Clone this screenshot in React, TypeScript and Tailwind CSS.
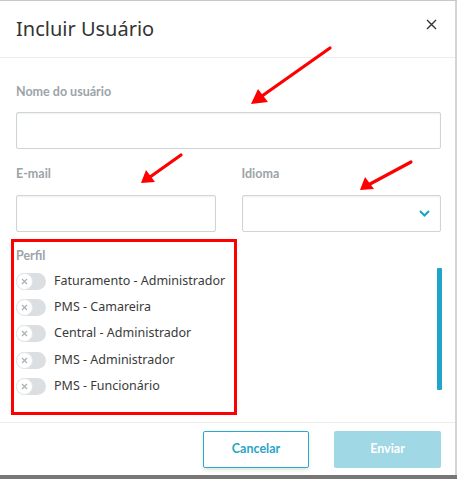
import React from 'react';

const perfis = [
  'Faturamento - Administrador',
  'PMS - Camareira',
  'Central - Administrador',
  'PMS - Administrador',
  'PMS - Funcionário',
];

function Toggle() {
  return (
    <div className="relative w-[30px] h-[17px] rounded-full bg-[#dcdfe2] shrink-0">
      <div className="absolute left-0 top-0 w-[17px] h-[17px] rounded-full bg-white border border-[#e3e5e7] flex items-center justify-center">
        <svg width="7" height="7" viewBox="0 0 7 7">
          <path d="M1 1 L6 6 M6 1 L1 6" stroke="#a9aeb2" strokeWidth="1.1" />
        </svg>
      </div>
    </div>
  );
}

function Label({ children }: { children: React.ReactNode }) {
  return (
    <div className="text-[12.5px] leading-4 font-bold text-[#9ba4a8]" style={{ fontFamily: 'Lato, sans-serif' }}>
      {children}
    </div>
  );
}

const inputCls =
  'w-full h-[37px] border border-[#cfd4d6] rounded-[2px] bg-white shadow-[inset_0_1px_2px_rgba(0,0,0,0.06)]';

export default function App() {
  return (
    <div
      className="relative w-[457px] h-[479px] bg-white border-t border-[#c8c8c8] overflow-hidden"
      style={{ fontFamily: '"Noto Sans", sans-serif' }}
    >
      <div className="absolute top-0 right-0 w-[2px] h-full bg-[#d4d4d4]" />

      <div className="h-[57px] pl-4 pr-5 flex items-center justify-between border-b border-[#ececec]">
        <h1 className="text-[20px] text-[#333] leading-none mb-[1px]">Incluir Usuário</h1>
        <svg width="11" height="11" viewBox="0 0 11 11" className="mb-[10px]">
          <path d="M1 1 L10 10 M10 1 L1 10" stroke="#333" strokeWidth="1.4" />
        </svg>
      </div>

      <div className="pl-4 pr-[16px] pt-[26px]">
        <Label>Nome do usuário</Label>
        <div className="mt-3">
          <div className={inputCls} />
        </div>

        <div className="mt-[17px] grid grid-cols-2 gap-[26px]">
          <div>
            <Label>E-mail</Label>
            <div className="mt-[13px]">
              <div className={inputCls} />
            </div>
          </div>
          <div>
            <Label>Idioma</Label>
            <div className="mt-[13px]">
              <div className={inputCls + ' flex items-center justify-end pr-[10px]'}>
                <svg width="11" height="7" viewBox="0 0 11 7">
                  <path d="M1 1 L5.5 5.5 L10 1" stroke="#1ba1c7" strokeWidth="2" fill="none" />
                </svg>
              </div>
            </div>
          </div>
        </div>

        <div className="mt-[16px] relative">
          <Label>Perfil</Label>
          <div className="mt-[4px] flex flex-col">
            {perfis.map((p) => (
              <div key={p} className="h-[26.3px] flex items-center gap-[8px]">
                <Toggle />
                <span className="text-[12.5px] text-[#3a3a3a]">{p}</span>
              </div>
            ))}
          </div>
          <div className="absolute right-[-1px] top-[20px] w-[5px] h-[122px] bg-[#1ea5c8] rounded-[1px]" />
        </div>
      </div>

      <div className="absolute left-0 right-[2px] top-[421px] h-[54px] border-t border-[#ececec] flex items-start justify-end gap-[25px] pr-[14px] pt-[8px]">
        <button className="w-[106px] h-[37px] border border-[#2aa7cd] rounded-[2px] text-[#2aa3c9] text-[12.5px] font-bold shadow-[0_2px_4px_rgba(0,0,0,0.12)]" style={{ fontFamily: 'Lato, sans-serif' }}>
          Cancelar
        </button>
        <button className="w-[107px] h-[37px] rounded-[2px] bg-[#a1d8e6] text-white text-[12.5px] font-bold" style={{ fontFamily: 'Lato, sans-serif' }}>
          Enviar
        </button>
      </div>
      <div className="absolute left-0 bottom-0 w-full h-[4px] bg-[#777]" />

      {/* annotations */}
      <div className="absolute left-[11px] top-[238px] w-[226px] h-[176px] border-[3px] border-[#ff0000]" />
      <svg className="absolute left-0 top-0" width="457" height="479" viewBox="0 0 457 479">
        <g stroke="#ff0000" strokeWidth="3.2" strokeLinecap="round" fill="#ff0000">
          <line x1="330" y1="47" x2="262" y2="95" />
          <line x1="181" y1="154" x2="150" y2="176" />
          <line x1="411" y1="161" x2="370" y2="183" />
        </g>
        <g fill="#ff0000">
          <polygon points="251,103 258,88 268,101" />
          <polygon points="141,182 146,169 155,181" />
          <polygon points="360,189 365,176 374,188" />
        </g>
      </svg>
    </div>
  );
}
